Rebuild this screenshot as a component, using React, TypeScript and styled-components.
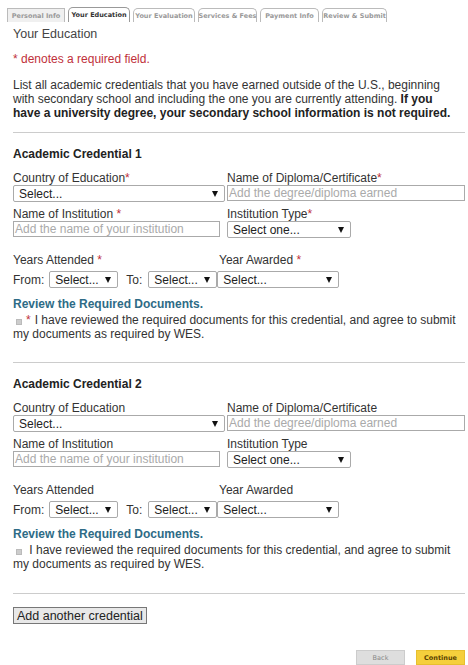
import React from "react";
import styled, { createGlobalStyle } from "styled-components";

const Global = createGlobalStyle`
  html, body { margin: 0; padding: 0; background: #fff; }
  body { font-family: "Liberation Sans", Arial, sans-serif; font-size: 12px; color: #333; }
  * { box-sizing: border-box; }
`;

const Page = styled.div`
  width: 468px;
  padding: 8px 3px 0 13px;
`;

const Tabs = styled.div`
  display: flex;
  gap: 3px;
  margin-left: -6px;
  height: 14px;
  align-items: flex-end;
`;

const Tab = styled.div<{ $w: number; $active?: boolean; $flat?: boolean }>`
  width: ${(p) => p.$w}px;
  height: ${(p) => (p.$active ? 15 : 14)}px;
  border: 1px solid ${(p) => (p.$active ? "#999" : "#bbb")};
  border-bottom: none;
  border-radius: ${(p) => (p.$flat ? "0" : "5px 5px 0 0")};
  background: ${(p) => (p.$flat ? "#f0f0f0" : "#fff")};
  font-family: Verdana, "DejaVu Sans", sans-serif;
  font-size: 6.5px;
  font-weight: bold;
  color: ${(p) => (p.$active ? "#333" : "#999")};
  display: flex;
  align-items: center;
  justify-content: center;
  white-space: nowrap;
`;

const Title = styled.div`
  font-size: 12.5px;
  color: #444;
  margin-top: 5px;
  line-height: 15px;
`;

const Required = styled.div`
  color: #c0303a;
  margin-top: 10px;
  line-height: 15px;
`;

const Intro = styled.p`
  margin: 11px 0 0;
  width: 440px;
  line-height: 14px;
  color: #333;
  b { color: #222; }
`;

const Rule = styled.hr<{ $gap?: number }>`
  border: none;
  border-top: 1px solid #ccc;
  margin: ${(p) => p.$gap ?? 12}px 0 0;
`;

const Section = styled.section`
  padding-top: 14px;
`;

const SectionTitle = styled.h3`
  margin: 0 0 9px;
  font-size: 12px;
  font-weight: bold;
  color: #222;
  line-height: 15px;
`;

const Grid = styled.div`
  display: grid;
  grid-template-columns: 214px 238px;
  row-gap: 5px;
`;

const Field = styled.div`
  display: flex;
  flex-direction: column;
`;

const Label = styled.label`
  line-height: 14px;
  color: #333;
  span { color: #c0303a; }
`;

const Select = styled.div<{ $w: number }>`
  width: ${(p) => p.$w}px;
  height: 17px;
  border: 1px solid #aaa;
  border-radius: 2px;
  background: #fff;
  display: flex;
  align-items: center;
  justify-content: space-between;
  padding: 0 6px 0 5px;
  color: #222;
  flex-shrink: 0;
  &::after {
    content: "";
    border-left: 3.5px solid transparent;
    border-right: 3.5px solid transparent;
    border-top: 6px solid #111;
  }
`;

const Input = styled.div<{ $w: number }>`
  width: ${(p) => p.$w}px;
  height: 16px;
  border: 1px solid #aaa;
  color: #aaa;
  padding-left: 1px;
  line-height: 14px;
`;

const YearsRow = styled.div`
  display: flex;
  align-items: center;
  margin-top: 15px;
`;

const YearsCol = styled.div`
  width: 206px;
`;

const Inline = styled.div`
  display: flex;
  align-items: center;
  margin-top: 4px;
  height: 17px;
`;

const InlineLabel = styled.span<{ $ml?: number; $mr?: number }>`
  margin-left: ${(p) => p.$ml ?? 0}px;
  margin-right: ${(p) => p.$mr ?? 5}px;
`;

const DocsLink = styled.div`
  margin-top: 9px;
  color: #2e6b86;
  font-weight: bold;
  line-height: 15px;
`;

const Agree = styled.div`
  line-height: 14px;
  color: #333;
  padding-top: 1px;
`;

const Box = styled.span`
  display: inline-block;
  width: 6px;
  height: 6px;
  background: #ccc;
  border: 1px solid #bbb;
  margin: 0 4px 0 3px;
  vertical-align: -1px;
`;

const Star = styled.span`
  color: #c0303a;
  margin-right: 4px;
`;

const AddButton = styled.button`
  margin-top: 13px;
  font-family: "Liberation Sans", Arial, sans-serif;
  font-size: 12.5px;
  height: 17px;
  padding: 0 3px;
  border: 1px solid #777;
  background: #e8e8e8;
  color: #222;
  line-height: 14px;
`;

const Footer = styled.div`
  display: flex;
  justify-content: flex-end;
  gap: 11px;
  margin-top: 26px;
`;

const NavButton = styled.div<{ $primary?: boolean }>`
  width: 49px;
  height: 15px;
  display: flex;
  align-items: center;
  justify-content: center;
  font-family: Verdana, "DejaVu Sans", sans-serif;
  font-size: 6.5px;
  font-weight: ${(p) => (p.$primary ? "bold" : "normal")};
  color: ${(p) => (p.$primary ? "#5a4200" : "#888")};
  background: ${(p) => (p.$primary ? "#f5cf3c" : "#dedede")};
  border: 1px solid ${(p) => (p.$primary ? "#e7bf2f" : "#ccc")};
`;

function Credential({ n, required }: { n: number; required: boolean }) {
  const s = required ? <span>*</span> : null;
  const sp = required ? <span> *</span> : null;
  return (
    <Section>
      <SectionTitle>Academic Credential {n}</SectionTitle>
      <Grid>
        <Field>
          <Label>Country of Education{s}</Label>
          <Select $w={212}>Select...</Select>
        </Field>
        <Field>
          <Label>Name of Diploma/Certificate{s}</Label>
          <Input $w={238}>Add the degree/diploma earned</Input>
        </Field>
        <Field>
          <Label>Name of Institution{sp}</Label>
          <Input $w={207}>Add the name of your institution</Input>
        </Field>
        <Field>
          <Label>Institution Type{s}</Label>
          <Select $w={124}>Select one...</Select>
        </Field>
      </Grid>
      <YearsRow>
        <YearsCol>
          <Label>Years Attended{sp}</Label>
        </YearsCol>
        <Label>Year Awarded{sp}</Label>
      </YearsRow>
      <Inline>
        <InlineLabel>From:</InlineLabel>
        <Select $w={69}>Select...</Select>
        <InlineLabel $ml={8} $mr={6}>To:</InlineLabel>
        <Select $w={69}>Select...</Select>
        <Select $w={122}>Select...</Select>
      </Inline>
      <DocsLink>Review the Required Documents.</DocsLink>
      <Agree>
        <Box />
        {required ? <Star>*</Star> : " "}I have reviewed the required documents for this credential, and agree to submit my documents as required by WES.
      </Agree>
    </Section>
  );
}

export default function App() {
  const tabs = [
    { t: "Personal Info", w: 58, flat: true },
    { t: "Your Education", w: 62, active: true },
    { t: "Your Evaluation", w: 62 },
    { t: "Services & Fees", w: 59 },
    { t: "Payment Info", w: 59 },
    { t: "Review & Submit", w: 65 },
  ];
  return (
    <>
      <Global />
      <Page>
        <Tabs>
          {tabs.map((x) => (
            <Tab key={x.t} $w={x.w} $active={x.active} $flat={x.flat}>
              {x.t}
            </Tab>
          ))}
        </Tabs>
        <Title>Your Education</Title>
        <Required>* denotes a required field.</Required>
        <Intro>
          List all academic credentials that you have earned outside of the U.S., beginning with secondary school and including the one you are currently attending. <b>If you have a university degree, your secondary school information is not required.</b>
        </Intro>
        <Rule />
        <Credential n={1} required />
        <Rule $gap={21} />
        <Credential n={2} required={false} />
        <Rule $gap={22} />
        <AddButton>Add another credential</AddButton>
        <Footer>
          <NavButton>Back</NavButton>
          <NavButton $primary>Continue</NavButton>
        </Footer>
      </Page>
    </>
  );
}
